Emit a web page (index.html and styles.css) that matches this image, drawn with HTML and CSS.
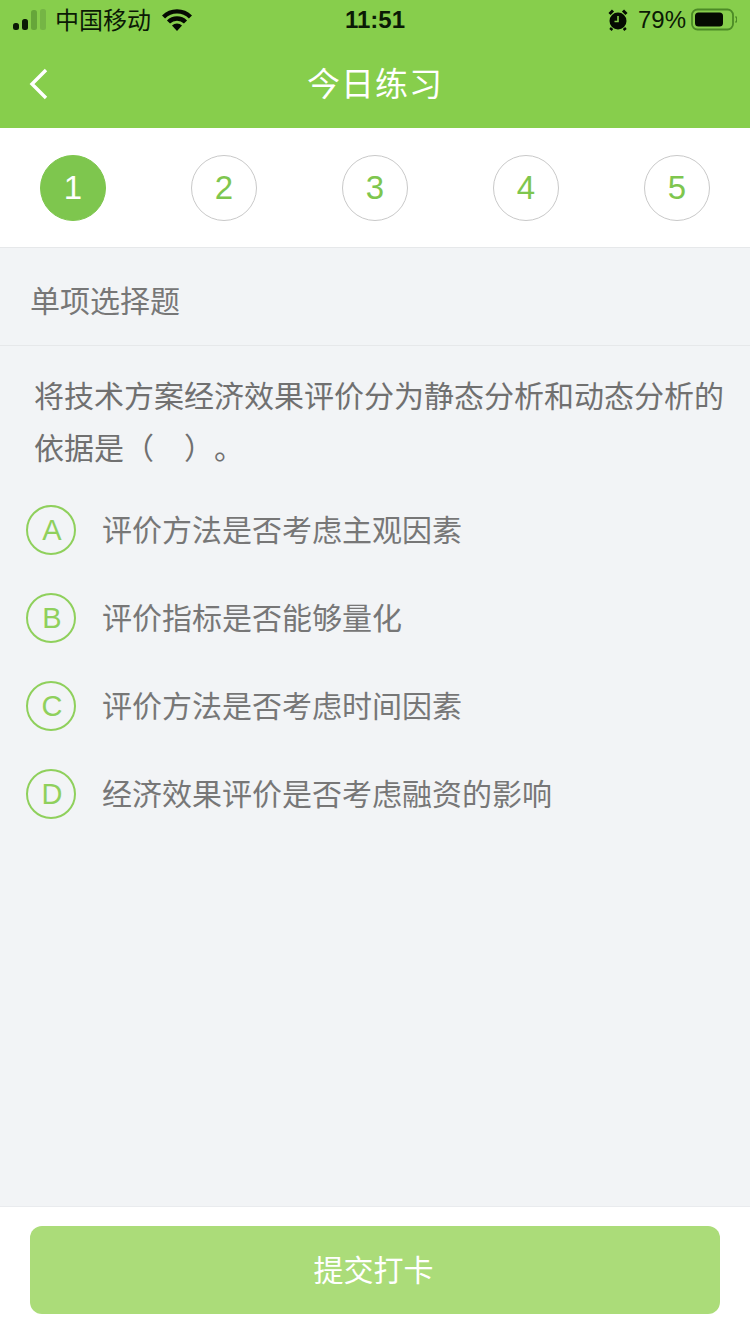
FILE: index.html
```html
<!DOCTYPE html>
<html lang="zh-CN">
<head>
    <meta charset="UTF-8">
    <meta name="viewport" content="width=device-width, initial-scale=1.0">
    <title>今日练习</title>
    <link rel="stylesheet" href="styles.css">
</head>
<body>
    <div class="page">
        <!-- 顶部 -->
        <div class="header">
            <div class="status-bar">
                <div class="status-left">
                    <svg class="signal" width="33" height="22" viewBox="0 0 33 22">
                        <rect x="0" y="14" width="6" height="7" rx="2.5" fill="#0b1a05"/>
                        <rect x="9" y="10" width="6" height="11" rx="2.5" fill="#0b1a05"/>
                        <rect x="18" y="1" width="6" height="20" rx="2.5" fill="#66a63a"/>
                        <rect x="27" y="0" width="6" height="21" rx="2.5" fill="#75b545"/>
                    </svg>
                    <span class="carrier">中国移动</span>
                    <svg class="wifi" width="30" height="22" viewBox="0 0 30 22">
                        <path d="M1.5 8 A19 19 0 0 1 28.5 8" fill="none" stroke="#050a02" stroke-width="4.4"/>
                        <path d="M6.5 13 A12 12 0 0 1 23.5 13" fill="none" stroke="#050a02" stroke-width="4.4"/>
                        <path d="M10 16.5 A7.5 7.5 0 0 1 20 16.5 L15 22 Z" fill="#050a02"/>
                    </svg>
                </div>
                <div class="status-time">11:51</div>
                <div class="status-right">
                    <svg class="alarm" width="20" height="22" viewBox="0 0 20 22">
                        <circle cx="10" cy="12" r="8.5" fill="#050a02"/>
                        <path d="M10 7 V12.5 H6.5" fill="none" stroke="#87ce4c" stroke-width="1.6"/>
                        <path d="M1.5 5 L5 1.5 M18.5 5 L15 1.5 M4 19 L2.5 21 M16 19 L17.5 21" stroke="#050a02" stroke-width="3"/>
                    </svg>
                    <span class="battery-text">79%</span>
                    <svg class="battery" width="46" height="24" viewBox="0 0 46 24">
                        <rect x="1" y="1.5" width="41" height="20" rx="5.5" fill="none" stroke="#4c8a26" stroke-width="1.8"/>
                        <rect x="4" y="4.5" width="28" height="14" rx="3.5" fill="#050a02"/>
                        <path d="M44.5 8.5 A4 4 0 0 1 44.5 14.5" fill="none" stroke="#4c8a26" stroke-width="1.4"/>
                    </svg>
                </div>
            </div>
            <div class="nav-bar">
                <svg class="back" width="20" height="32" viewBox="0 0 20 32">
                    <path d="M17 2 L3 16 L17 30" fill="none" stroke="#fff" stroke-width="3.4"/>
                </svg>
                <div class="nav-title">今日练习</div>
            </div>
        </div>

        <!-- 题号 -->
        <div class="steps">
            <div class="step active">1</div>
            <div class="step">2</div>
            <div class="step">3</div>
            <div class="step">4</div>
            <div class="step">5</div>
        </div>

        <!-- 题目 -->
        <div class="content">
            <div class="section-title">单项选择题</div>
            <div class="question">将技术方案经济效果评价分为静态分析和动态分析的依据是（　）。</div>
            <div class="options">
                <div class="option"><span class="option-key">A</span><span class="option-text">评价方法是否考虑主观因素</span></div>
                <div class="option"><span class="option-key">B</span><span class="option-text">评价指标是否能够量化</span></div>
                <div class="option"><span class="option-key">C</span><span class="option-text">评价方法是否考虑时间因素</span></div>
                <div class="option"><span class="option-key">D</span><span class="option-text">经济效果评价是否考虑融资的影响</span></div>
            </div>
        </div>

        <!-- 提交 -->
        <div class="footer">
            <div class="submit">提交打卡</div>
        </div>
    </div>
</body>
</html>
```

FILE: styles.css
```css
* {
    margin: 0;
    padding: 0;
    box-sizing: border-box;
    font-family: "Liberation Sans", "Noto Sans CJK SC", sans-serif;
}

body {
    background-color: #f2f4f6;
}

.page {
    width: 750px;
    height: 1334px;
    display: flex;
    flex-direction: column;
    overflow: hidden;
}

/* 顶部 */
.header {
    height: 128px;
    background: #87ce4c;
}

.status-bar {
    height: 40px;
    display: grid;
    grid-template-columns: 1fr auto 1fr;
    align-items: center;
    padding: 0 13px;
    color: #0b1a05;
}

.status-left {
    display: flex;
    align-items: center;
}

.signal {
    margin-right: 9px;
}

.carrier {
    font-size: 24px;
    margin-right: 11px;
    padding-bottom: 3px;
}

.status-time {
    font-size: 24px;
    font-weight: 700;
}

.status-right {
    display: flex;
    align-items: center;
    justify-content: flex-end;
}

.alarm {
    margin-right: 10px;
}

.battery-text {
    font-size: 24px;
    margin-right: 5px;
}

.nav-bar {
    height: 88px;
    display: flex;
    align-items: center;
    justify-content: center;
    position: relative;
}

.back {
    position: absolute;
    left: 29px;
    top: 28px;
}

.nav-title {
    color: #fff;
    font-size: 33px;
    letter-spacing: 1px;
    padding-bottom: 4px;
}

/* 题号 */
.steps {
    height: 120px;
    background: #fff;
    border-bottom: 1px solid #e6e8ea;
    display: flex;
    justify-content: space-between;
    align-items: center;
    padding: 0 40px;
}

.step {
    width: 66px;
    height: 66px;
    border-radius: 50%;
    border: 1px solid #c9c9c9;
    display: flex;
    align-items: center;
    justify-content: center;
    font-size: 33px;
    color: #7ec64e;
}

.step.active {
    background: #7ec64e;
    border-color: #7ec64e;
    color: #fff;
}

/* 题目 */
.content {
    flex: 1;
}

.section-title {
    height: 98px;
    border-bottom: 1px solid #e6e8ea;
    padding: 4px 0 0 30px;
    display: flex;
    align-items: center;
    font-size: 30px;
    color: #777;
}

.question {
    padding: 25px 20px 0 34px;
    font-size: 30px;
    line-height: 52px;
    color: #707070;
    text-spacing-trim: space-all;
}

.options {
    margin-top: 11px;
    padding-left: 26px;
}

.option {
    height: 88px;
    display: flex;
    align-items: center;
    font-size: 30px;
    color: #777;
}

.option-key {
    width: 50px;
    height: 50px;
    border-radius: 50%;
    border: 2px solid #8fd05c;
    color: #8fd05c;
    font-size: 29px;
    padding: 1px 0 0 2px;
    display: flex;
    align-items: center;
    justify-content: center;
    margin-right: 26px;
    flex-shrink: 0;
}

.option-text {
    padding-bottom: 4px;
}

/* 提交 */
.footer {
    height: 128px;
    background: #fff;
    border-top: 1px solid #e9ebee;
    padding: 19px 30px 0;
}

.submit {
    height: 88px;
    background: #abdc79;
    border-radius: 12px;
    color: #fff;
    font-size: 30px;
    padding: 0 3px 4px 0;
    display: flex;
    align-items: center;
    justify-content: center;
}
```
